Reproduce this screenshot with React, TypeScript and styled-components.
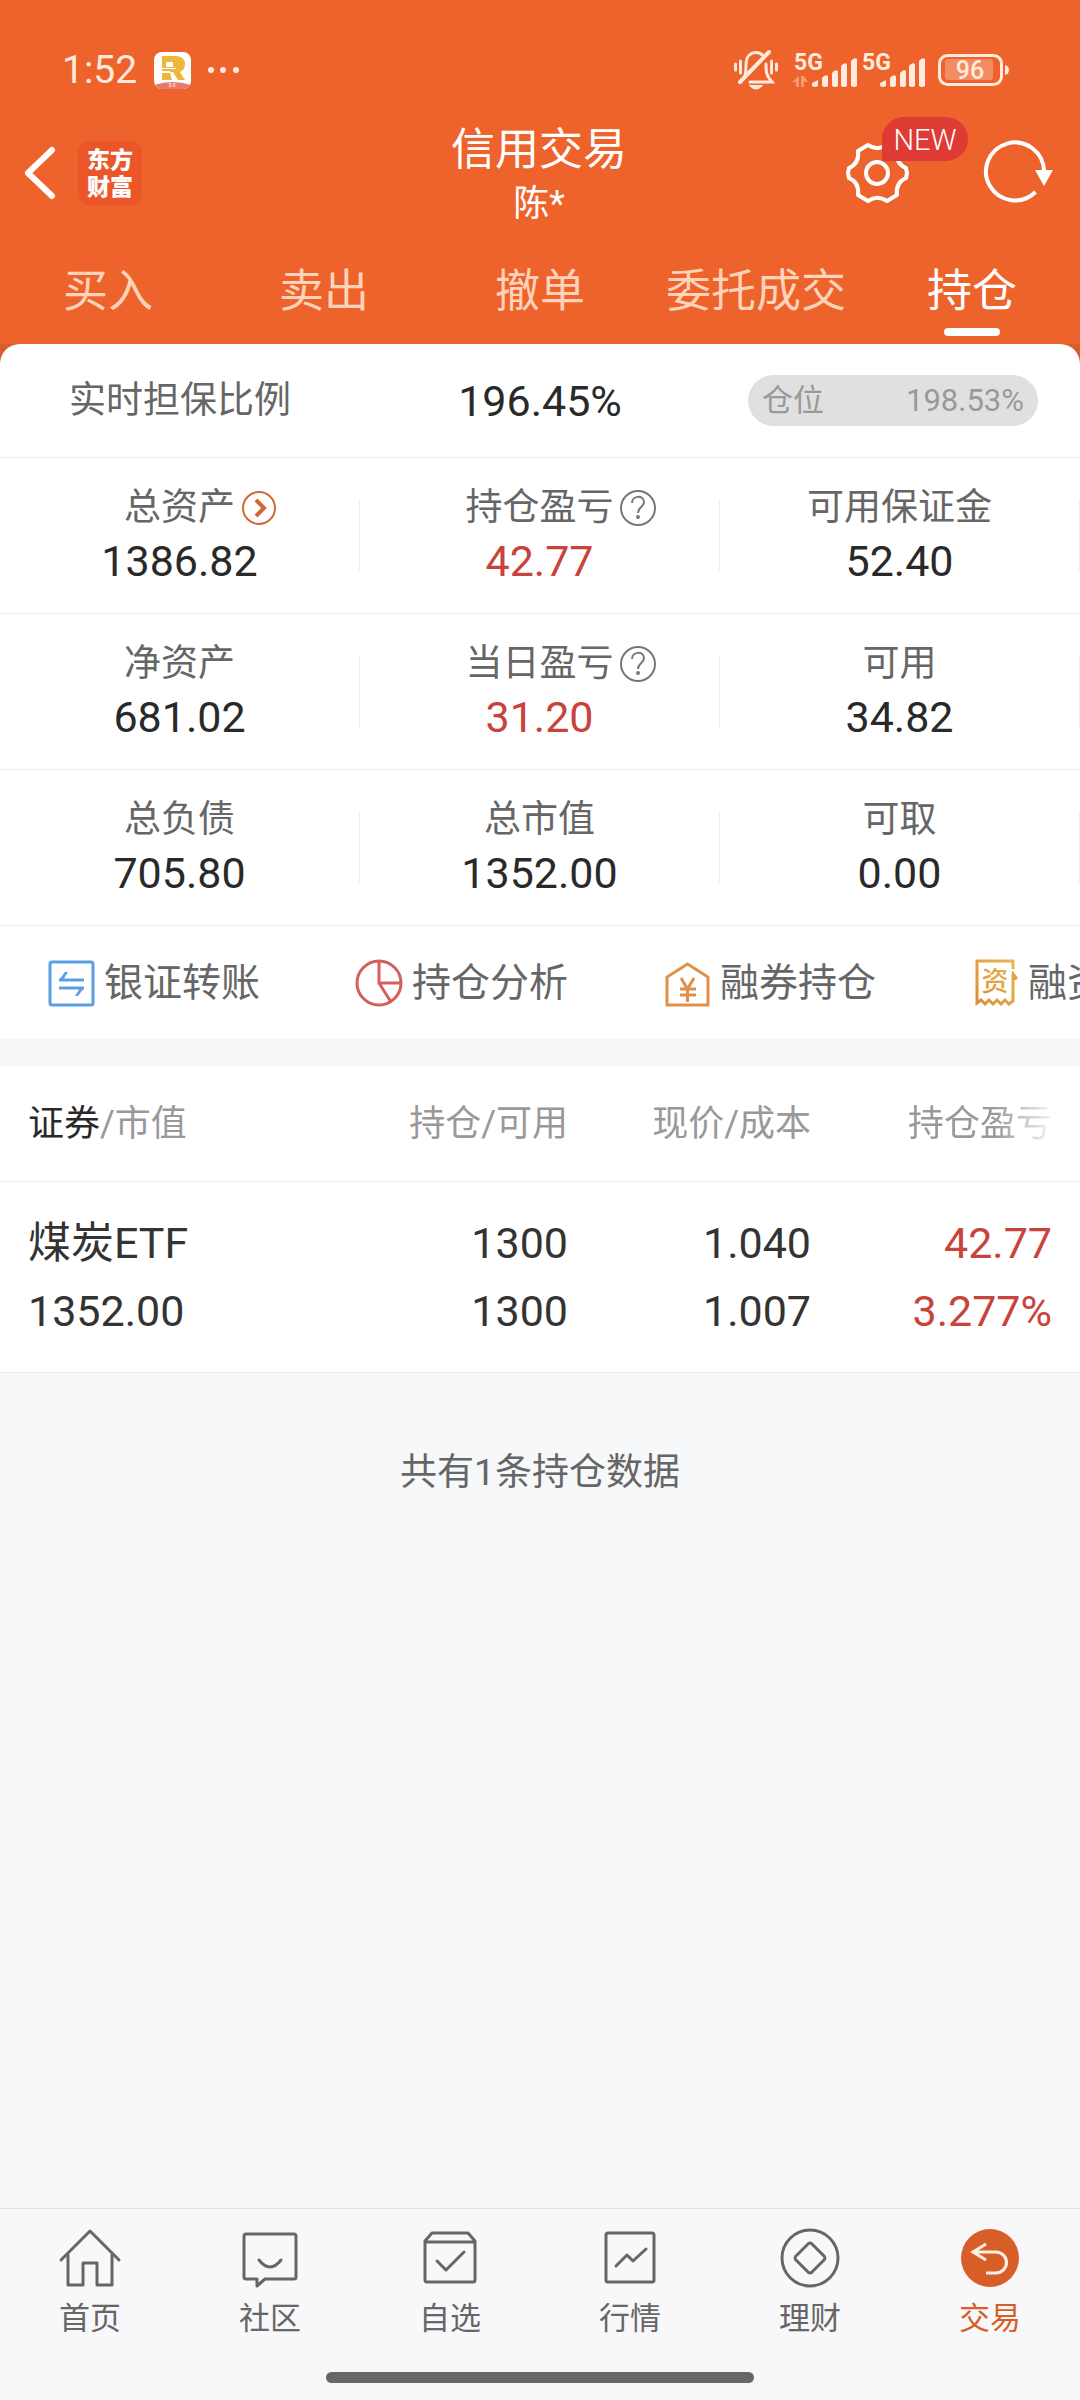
import { useState } from 'react';
import type { ReactNode } from 'react';
import styled, { createGlobalStyle } from 'styled-components';

const colors = {
  brand: '#ed632b',
  brandDark: '#d65e2c',
  accent: '#d75f27',
  badge: '#dd3b33',
  rise: '#c8433b',
  ink: '#292929',
  text: '#666666',
  muted: '#999999',
  line: '#ececec',
  page: '#f6f8fa',
  nav: '#f8f8fa',
  white: '#ffffff',
  status: '#ffeadd',
  tab: '#ffd3b9',
};

const fontStack = 'Roboto, "Noto Sans CJK SC", sans-serif';

const GlobalStyle = createGlobalStyle`
  * {
    box-sizing: border-box;
  }
  body {
    margin: 0;
    background: ${colors.page};
    font-family: ${fontStack};
    color: ${colors.text};
  }
  button {
    border: 0;
    margin: 0;
    padding: 0;
    background: none;
    font: inherit;
    color: inherit;
    cursor: pointer;
  }
  h1, p, dl, dt, dd {
    margin: 0;
    font-weight: 400;
  }
  svg {
    display: block;
    flex: none;
    overflow: visible;
  }
`

const Page = styled.div`
  display: flex;
  flex-direction: column;
  min-height: 100vh;
  overflow-x: hidden;
`

/* header */

const Header = styled.header`
  padding-top: 40px;
  background: ${colors.brand};
  color: ${colors.white};
`

const StatusBar = styled.div`
  display: flex;
  align-items: center;
  justify-content: space-between;
  height: 60px;
  padding: 0 70px 0 62px;
  color: ${colors.status};
`

const StatusGroup = styled.div<{ $gap: number }>`
  display: flex;
  align-items: center;
  gap: ${({ $gap }) => $gap}px;
`

const Clock = styled.span`
  font-size: 39px;
  line-height: 60px;
`

const TitleBar = styled.div`
  display: flex;
  align-items: center;
  height: 146px;
  padding: 0 26px 0 24px;
`

const TitleSide = styled.div<{ $end?: boolean }>`
  display: flex;
  flex: 1;
  align-items: center;
  justify-content: ${({ $end }) => ($end ? 'flex-end' : 'flex-start')};
  gap: ${({ $end }) => ($end ? 74 : 22)}px;
`

const TitleText = styled.div`
  padding-top: 8px;
  text-align: center;
`

const Title = styled.h1`
  font-size: 44px;
  line-height: 54px;
`

const Account = styled.p`
  font-size: 36px;
  line-height: 54px;
`

const Logo = styled.div`
  width: 64px;
  height: 64px;
  padding-top: 6px;
  border-radius: 12px;
  background: #ec5429;
  font-size: 23px;
  line-height: 27px;
  font-weight: 900;
  text-align: center;
`

const IconButton = styled.button`
  position: relative;
  display: block;
`

const NewBadge = styled.span`
  position: absolute;
  left: 36px;
  top: -24px;
  width: 86px;
  border-radius: 22px 22px 22px 0;
  background: ${colors.badge};
  font-size: 29px;
  font-weight: 300;
  line-height: 46px;
  height: 44px;
  text-align: center;
`

const Tabs = styled.nav`
  display: grid;
  grid-template-columns: repeat(5, 1fr);
`

const Tab = styled.button<{ $active: boolean }>`
  display: flex;
  flex-direction: column;
  align-items: center;
  height: 98px;
  padding-top: 10px;
  font-size: 45px;
  line-height: 72px;
  white-space: nowrap;
  color: ${({ $active }) => ($active ? colors.white : colors.tab)};

  &::after {
    content: '';
    width: 56px;
    height: 8px;
    border-radius: 4px;
    background: ${({ $active }) => ($active ? colors.white : 'transparent')};
  }
`

/* asset summary */

const SheetBacking = styled.div`
  background: linear-gradient(${colors.brandDark} 20px, ${colors.white} 20px);
`

const Sheet = styled.section`
  border-radius: 20px 20px 0 0;
  background: ${colors.white};
`

const RatioRow = styled.div`
  display: grid;
  grid-template-columns: 1fr auto 1fr;
  align-items: center;
  height: 114px;
  padding: 0 42px;
  border-bottom: 1px solid ${colors.line};
  line-height: 54px;
`

const RatioLabel = styled.span`
  padding-left: 27px;
  font-size: 37px;
`

const RatioValue = styled.span`
  font-size: 43px;
  color: ${colors.ink};
`

const PositionPill = styled.div`
  display: flex;
  justify-self: end;
  justify-content: space-between;
  width: 290px;
  padding: 0 14px;
  border-radius: 26px;
  background: #e0e0e0;
  font-size: 31px;
  line-height: 51px;
  color: ${colors.muted};
`

const AssetRow = styled.dl`
  display: grid;
  grid-template-columns: repeat(3, 1fr);
  align-items: center;
  height: 156px;
  border-bottom: 1px solid ${colors.line};
`

const AssetCell = styled.div`
  display: flex;
  flex-direction: column;
  justify-content: center;
  height: 71px;
  padding-bottom: 4px;
  border-right: 1px solid ${colors.line};
`

const AssetLabel = styled.dt`
  display: grid;
  grid-template-columns: 1fr auto 1fr;
  align-items: center;
  gap: 6px;
  font-size: 37px;
  line-height: 54px;
`

const AssetValue = styled.dd<{ $rise?: boolean }>`
  font-size: 43px;
  line-height: 52px;
  text-align: center;
  color: ${({ $rise }) => ($rise ? colors.rise : colors.ink)};
`

const LabelIcon = styled.button`
  grid-column: 3;
  justify-self: start;
`

const LabelText = styled.span`
  grid-column: 2;
`

const Shortcuts = styled.div`
  display: flex;
  align-items: center;
  gap: 95px;
  height: 113px;
  padding-left: 47px;
  overflow: hidden;
`

const Shortcut = styled.button`
  display: flex;
  flex: none;
  align-items: center;
  gap: 9px;
  font-size: 39px;
  line-height: 60px;
`

/* holdings */

const Holdings = styled.table`
  width: 100%;
  margin-top: 28px;
  border-collapse: collapse;
  table-layout: fixed;
  background: ${colors.white};

  th, td {
    padding: 0;
    text-align: right;
    font-weight: 400;
    white-space: nowrap;
  }
  th:first-child, td:first-child {
    padding-left: 28px;
    text-align: left;
  }
  th:last-child, td:last-child {
    padding-right: 28px;
  }
  tr {
    border-bottom: 1px solid ${colors.line};
  }
  th {
    height: 114px;
    font-size: 36px;
    line-height: 54px;
    color: ${colors.muted};
  }
  td {
    padding: 27px 0;
    font-size: 43px;
    line-height: 68px;
    color: #333333;
  }
`

const Col = styled.col<{ $width?: number }>`
  width: ${({ $width }) => ($width ? `${$width}px` : 'auto')};
`

const SortedName = styled.span`
  color: ${colors.ink};
`

const FadedText = styled.span`
  mask-image: linear-gradient(to right, #000 60%, rgba(0, 0, 0, 0.1));
`

const Line = styled.div<{ $rise?: boolean }>`
  color: ${({ $rise }) => ($rise ? colors.rise : 'inherit')};
`

const Summary = styled.p`
  padding: 73px 0;
  font-size: 37px;
  line-height: 54px;
  text-align: center;
`

/* bottom navigation */

const BottomBar = styled.footer`
  margin-top: auto;
  padding: 19px 0 17px;
  border-top: 1px solid #e2e2e2;
  background: ${colors.nav};
`

const BottomNav = styled.nav`
  display: grid;
  grid-template-columns: repeat(6, 1fr);
`

const NavItem = styled.a<{ $active?: boolean }>`
  display: flex;
  flex-direction: column;
  align-items: center;
  gap: 11px;
  font-size: 31px;
  line-height: 40px;
  text-decoration: none;
  color: ${({ $active }) => ($active ? colors.accent : colors.text)};
`

const HomeIndicator = styled.div`
  width: 428px;
  height: 11px;
  margin: 33px auto 0;
  border-radius: 6px;
  background: #676767;
`

/* icons */

const AppIcon = () => (
  <svg width="37" height="37" viewBox="0 0 37 37" aria-hidden="true">
    <clipPath id="appIcon"><rect width="37" height="37" rx="8" /></clipPath>
    <g clipPath="url(#appIcon)">
      <rect width="37" height="37" fill="#fff" />
      <path d="M8 4h15q8 1 8 8 0 6-5 8l5 8h-7l-5-8H8z" fill="#efb63e" />
      <path d="M12 10h7v5h-7zM8 16h14v1H8zM8 19h8v1H8z" fill="#fff" />
      <path d="M8 21h8l2 7H8z" fill="#efb63e" />
      <path d="M0 33q18-6 37 0v4H0z" fill="#e9786a" />
    </g>
    <text x="18" y="35" fontSize="5" textAnchor="middle" fill="#fff">3.0</text>
  </svg>
)

const DotsIcon = () => (
  <svg width="32" height="8" viewBox="0 0 32 8" fill="currentColor" aria-hidden="true">
    <circle cx="3" cy="4" r="3" />
    <circle cx="15" cy="4" r="3" />
    <circle cx="28" cy="4" r="3" />
  </svg>
)

const MuteIcon = () => (
  <svg width="44" height="40" viewBox="0 0 44 40" fill="none" stroke="currentColor" strokeWidth="3" strokeLinecap="round" aria-hidden="true">
    <path d="M1.500 14v6M6.500 11v12M37.500 11v12M42.500 14v6" />
    <path d="M11 25c1-3 1-5 1-10C12 7 16 2.500 22 2.500c3 0 5 1 7 3" />
    <path d="M32 14c0 8 0 11 6 18H16" />
    <path d="M6 32L35 2" strokeWidth="4" />
    <path d="M17 36h10q-5 5-10 0z" fill="currentColor" strokeWidth="2" />
  </svg>
)

const SignalIcon = ({ data }: { data?: boolean }) => (
  <svg width="64" height="36" viewBox="0 0 64 36" fill="currentColor" aria-hidden="true">
    <text x="0" y="18" fontSize="23" fontWeight="700" fill="currentColor">5G</text>
    <path d="M18 34v-3l6-3v6q-3 2-6 0zM28 34v-8q3-4 6-2v10q-3 2-6 0zM38 34V21q3-4 6-2v15q-3 2-6 0zM47 34V14q3-4 6-2v22q-3 2-6 0zM57 34V9q3-4 6-2v27q-3 2-6 0z" />
    {data && <path d="M5 24v11H2v-5h-4zM7 35V24h3l4 6h-4v5z" opacity="0.4" />}
  </svg>
)

const BatteryIcon = () => (
  <svg width="72" height="32" viewBox="0 0 72 32" fill="none" aria-hidden="true">
    <rect x="1.500" y="1.500" width="62" height="29" rx="8" stroke="currentColor" strokeWidth="3" />
    <rect x="7" y="5" width="48" height="21" rx="3" fill="#f38c62" />
    <path d="M67 11q4 1 4 5t-4 5z" fill="currentColor" />
    <text x="32" y="25" fontSize="25" fontWeight="500" textAnchor="middle" fill="currentColor">96</text>
  </svg>
)

const BackIcon = () => (
  <svg width="32" height="54" viewBox="0 0 32 54" fill="none" stroke="currentColor" strokeWidth="6" strokeLinecap="round" strokeLinejoin="round" aria-hidden="true">
    <path d="M28 4L4 27l24 23" />
  </svg>
)

const GearIcon = () => (
  <svg width="64" height="64" viewBox="0 0 64 64" fill="none" stroke="currentColor" strokeWidth="4" strokeLinejoin="round" aria-hidden="true">
    <path d="M22 4C28 8 35 8 41 4L51 10C50 18 53 24 60 27L61 32 60 37C53 40 50 46 51 54L41 60C35 56 28 56 22 60L12 54C13 46 10 40 3 37L2 32 3 27C10 24 13 18 12 10Z" />
    <circle cx="31" cy="32" r="11" />
  </svg>
)

const RefreshIcon = () => (
  <svg width="70" height="64" viewBox="0 0 70 64" fill="none" stroke="currentColor" strokeWidth="4" aria-hidden="true">
    <path d="M60 30A29 29 0 1 0 51.500 51" />
    <path d="M51 29h18l-9 16z" fill="currentColor" stroke="none" />
  </svg>
)

const MoreIcon = () => (
  <svg width="36" height="36" viewBox="0 0 36 36" fill="none" stroke="#cd6a35" aria-hidden="true">
    <circle cx="18" cy="18" r="16" strokeWidth="2" />
    <path d="M15 10l8 8-8 8" strokeWidth="4" />
  </svg>
)

const HelpIcon = () => (
  <svg width="36" height="36" viewBox="0 0 36 36" fill="none" stroke="#777" strokeWidth="2" aria-hidden="true">
    <circle cx="18" cy="18" r="17" />
    <path d="M12 13c0-8 12-8 12-1 0 5-6 5-6 11" />
    <circle cx="18" cy="27" r="2" fill="#777" stroke="none" />
  </svg>
)

const TransferIcon = () => (
  <svg width="48" height="48" viewBox="0 0 48 48" fill="none" stroke="#5b9fe3" strokeWidth="3" aria-hidden="true">
    <rect x="3" y="3" width="43" height="43" rx="2" />
    <path d="M12 21h25M12 29h25" />
    <path d="M12 21l6-8h3l-5 8zM37 29l-6 8h-3l5-8z" fill="#5b9fe3" stroke="none" />
  </svg>
)

const PieIcon = () => (
  <svg width="48" height="48" viewBox="0 0 48 48" fill="none" stroke="#d2605c" strokeWidth="3" aria-hidden="true">
    <circle cx="24" cy="24" r="22" />
    <path d="M24 1v23h23M24 24l12 19" />
  </svg>
)

const HouseYenIcon = () => (
  <svg width="48" height="48" viewBox="0 0 48 48" fill="none" stroke="#e0904a" strokeWidth="3" aria-hidden="true">
    <path d="M4 46V18L24.500 5 45 18v28z" />
    <path d="M18 19l6.500 11L31 19M17 30h16M17 36h16M24.500 30v13" />
  </svg>
)

const BillIcon = () => (
  <svg width="48" height="48" viewBox="0 0 48 48" fill="none" strokeWidth="3" aria-hidden="true">
    <linearGradient id="bill" x1="1" y1="0" x2="0" y2="1">
      <stop offset="0" stopColor="#e9b64c" />
      <stop offset="1" stopColor="#d98e37" />
    </linearGradient>
    <path d="M42 10V2H6v42l4-3 4 4 4-4 4 4 4-4 4 4 4-4 4 4 4-3V15" stroke="url(#bill)" />
    <path d="M41 11l6 8-2 2h-4z" fill="#e3a63f" />
    <text x="24" y="32" fontSize="27" fontWeight="500" textAnchor="middle" fill="url(#bill)">资</text>
  </svg>
)

const NavSvg = ({ children }: { children: ReactNode }) => (
  <svg width="60" height="60" viewBox="0 0 60 60" fill="none" stroke="currentColor" strokeWidth="3" strokeLinecap="round" strokeLinejoin="round" aria-hidden="true">
    {children}
  </svg>
)

const tabs = ['买入', '卖出', '撤单', '委托成交', '持仓'];

interface Asset {
  label: string;
  value: string;
  rise?: boolean;
  icon?: 'more' | 'help';
}

const assetRows: Asset[][] = [
  [
    { label: '总资产', value: '1386.82', icon: 'more' },
    { label: '持仓盈亏', value: '42.77', rise: true, icon: 'help' },
    { label: '可用保证金', value: '52.40' },
  ],
  [
    { label: '净资产', value: '681.02' },
    { label: '当日盈亏', value: '31.20', rise: true, icon: 'help' },
    { label: '可用', value: '34.82' },
  ],
  [
    { label: '总负债', value: '705.80' },
    { label: '总市值', value: '1352.00' },
    { label: '可取', value: '0.00' },
  ],
];

const shortcuts = [
  { label: '银证转账', icon: <TransferIcon /> },
  { label: '持仓分析', icon: <PieIcon /> },
  { label: '融券持仓', icon: <HouseYenIcon /> },
  { label: '融资持仓', icon: <BillIcon /> },
];

const positions = [
  {
    name: '煤炭ETF',
    marketValue: '1352.00',
    held: '1300',
    available: '1300',
    price: '1.040',
    cost: '1.007',
    profit: '42.77',
    profitRate: '3.277%',
  },
];

const navItems = [
  {
    label: '首页',
    icon: (
      <NavSvg>
        <path d="M1 32L30 3l29 29" />
        <path d="M8 27v30h15V35h14v22h15V27" />
      </NavSvg>
    ),
  },
  {
    label: '社区',
    icon: (
      <NavSvg>
        <path d="M6 6h48q2 0 2 2v41q0 2-2 2H25l-8 7v-7H6q-2 0-2-2V8q0-2 2-2z" />
        <path d="M19 32q11 14 22 0" />
      </NavSvg>
    ),
  },
  {
    label: '自选',
    icon: (
      <NavSvg>
        <path d="M5 13l7-8h36l7 8v39q0 2-2 2H7q-2 0-2-2zM5 14h50" />
        <path d="M17 33l9 9 18-18" />
      </NavSvg>
    ),
  },
  {
    label: '行情',
    icon: (
      <NavSvg>
        <rect x="6" y="5" width="48" height="49" rx="2" />
        <path d="M16 38l11-11 6 6 13-12" />
      </NavSvg>
    ),
  },
  {
    label: '理财',
    icon: (
      <NavSvg>
        <circle cx="30" cy="30" r="28" />
        <path d="M28.500 15.500q1.500-1 3 0l13 13q1 1.500 0 3l-13 13q-1.500 1-3 0l-13-13q-1-1.500 0-3z" />
      </NavSvg>
    ),
  },
  {
    label: '交易',
    active: true,
    icon: (
      <NavSvg>
        <circle cx="30" cy="30" r="29" fill="currentColor" stroke="none" />
        <path d="M26 16L13 24l13 8M13 24h23a10 10 0 0 1 0 21H26" stroke="#fff0e4" strokeLinecap="butt" strokeLinejoin="miter" />
      </NavSvg>
    ),
  },
];

const AssetItem = ({ asset }: { asset: Asset }) => (
  <AssetCell>
    <AssetLabel>
      <LabelText>{asset.label}</LabelText>
      {asset.icon && (
        <LabelIcon type="button" aria-label={`${asset.label}说明`}>
          {asset.icon === 'more' ? <MoreIcon /> : <HelpIcon />}
        </LabelIcon>
      )}
    </AssetLabel>
    <AssetValue $rise={asset.rise}>{asset.value}</AssetValue>
  </AssetCell>
)

export default function App() {
  const [activeTab, setActiveTab] = useState('持仓');

  return (
    <Page>
      <GlobalStyle />
      <Header>
        <StatusBar>
          <StatusGroup $gap={17}>
            <Clock>1:52</Clock>
            <AppIcon />
            <DotsIcon />
          </StatusGroup>
          <StatusGroup $gap={4}>
            <StatusGroup $gap={16}>
              <MuteIcon />
              <SignalIcon data />
            </StatusGroup>
            <StatusGroup $gap={12}>
              <SignalIcon />
              <BatteryIcon />
            </StatusGroup>
          </StatusGroup>
        </StatusBar>
        <TitleBar>
          <TitleSide>
            <IconButton type="button" aria-label="返回">
              <BackIcon />
            </IconButton>
            <Logo>东方<br />财富</Logo>
          </TitleSide>
          <TitleText>
            <Title>信用交易</Title>
            <Account>陈*</Account>
          </TitleText>
          <TitleSide $end>
            <IconButton type="button" aria-label="设置">
              <GearIcon />
              <NewBadge>NEW</NewBadge>
            </IconButton>
            <IconButton type="button" aria-label="刷新">
              <RefreshIcon />
            </IconButton>
          </TitleSide>
        </TitleBar>
        <Tabs>
          {tabs.map((tab) => (
            <Tab key={tab} type="button" $active={tab === activeTab} onClick={() => setActiveTab(tab)}>
              {tab}
            </Tab>
          ))}
        </Tabs>
      </Header>

      <main>
        <SheetBacking>
          <Sheet>
            <RatioRow>
              <RatioLabel>实时担保比例</RatioLabel>
              <RatioValue>196.45%</RatioValue>
              <PositionPill>
                <span>仓位</span>
                <span>198.53%</span>
              </PositionPill>
            </RatioRow>
            {assetRows.map((row) => (
              <AssetRow key={row[0].label}>
                {row.map((asset) => (
                  <AssetItem key={asset.label} asset={asset} />
                ))}
              </AssetRow>
            ))}
            <Shortcuts>
              {shortcuts.map(({ label, icon }) => (
                <Shortcut key={label} type="button">
                  {icon}
                  {label}
                </Shortcut>
              ))}
            </Shortcuts>
          </Sheet>
        </SheetBacking>

        <Holdings>
          <colgroup>
            <Col />
            <Col $width={240} />
            <Col $width={243} />
            <Col $width={269} />
          </colgroup>
          <thead>
            <tr>
              <th><SortedName>证券</SortedName>/市值</th>
              <th>持仓/可用</th>
              <th>现价/成本</th>
              <th><FadedText>持仓盈亏</FadedText></th>
            </tr>
          </thead>
          <tbody>
            {positions.map((position) => (
              <tr key={position.name}>
                <td>
                  <Line>{position.name}</Line>
                  <Line>{position.marketValue}</Line>
                </td>
                <td>
                  <Line>{position.held}</Line>
                  <Line>{position.available}</Line>
                </td>
                <td>
                  <Line>{position.price}</Line>
                  <Line>{position.cost}</Line>
                </td>
                <td>
                  <Line $rise>{position.profit}</Line>
                  <Line $rise>{position.profitRate}</Line>
                </td>
              </tr>
            ))}
          </tbody>
        </Holdings>
        <Summary>共有{positions.length}条持仓数据</Summary>
      </main>

      <BottomBar>
        <BottomNav>
          {navItems.map(({ label, icon, active }) => (
            <NavItem key={label} href="#" $active={active}>
              {icon}
              {label}
            </NavItem>
          ))}
        </BottomNav>
        <HomeIndicator />
      </BottomBar>
    </Page>
  )
}
